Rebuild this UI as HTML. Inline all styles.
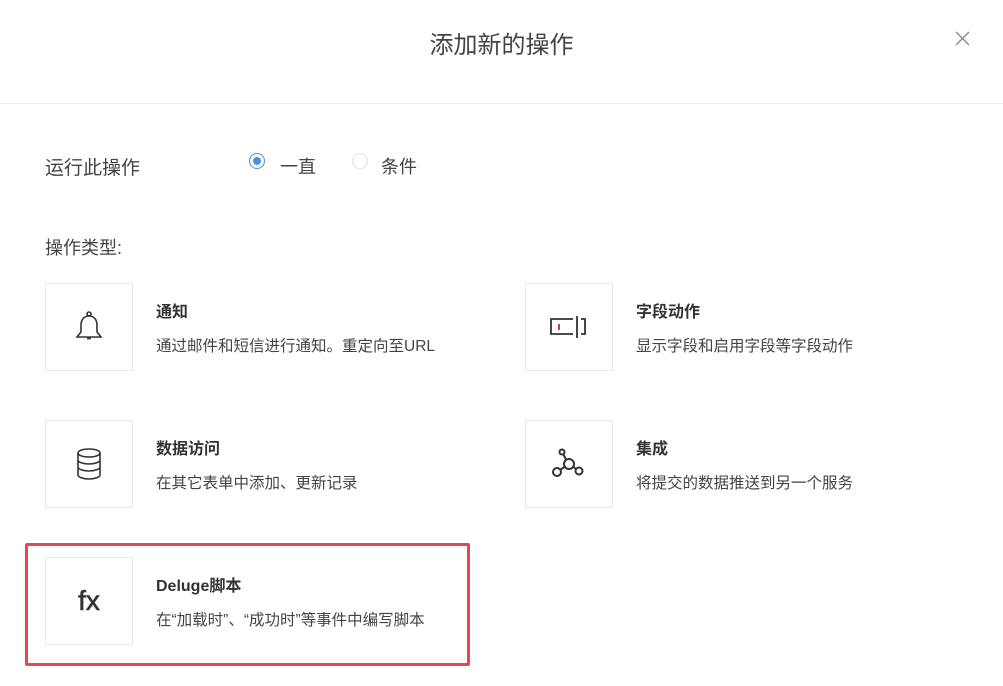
<!DOCTYPE html>
<html><head><meta charset="utf-8"><style>
body{margin:0;width:1003px;height:686px;background:#fff;font-family:"Liberation Sans","Noto Sans CJK SC",sans-serif;color:#333;position:relative;overflow:hidden}
.a{position:absolute;white-space:nowrap}
.box{position:absolute;width:86px;height:86px;border:1px solid #e8e8e8;display:flex;align-items:center;justify-content:center}
.t{position:absolute;font-size:16px;font-weight:bold;color:#333}
.d{position:absolute;font-size:15.5px;color:#444}
</style></head><body>
<div class="a" style="left:0;width:1003px;top:25px;text-align:center;font-size:24px;color:#444">添加新的操作</div>
<svg class="a" style="left:955px;top:31px" width="15" height="15"><path d="M1 1L14 14M14 1L1 14" stroke="#888" stroke-width="1.3"/></svg>
<div class="a" style="left:0;top:103px;width:1003px;height:1px;background:#ebebeb"></div>
<div class="a" style="left:45px;top:153px;font-size:19px;color:#444">运行此操作</div>
<div class="a" style="left:249px;top:153px;width:16px;height:16px;border:1px solid #4a90e2;border-radius:50%;box-sizing:border-box"></div>
<div class="a" style="left:253px;top:157px;width:8px;height:8px;background:#4a90e2;border-radius:50%"></div>
<div class="a" style="left:280px;top:153px;font-size:18px;color:#444">一直</div>
<div class="a" style="left:352px;top:153px;width:16px;height:16px;border:1px solid #dde;border-radius:50%;box-sizing:border-box"></div>
<div class="a" style="left:381px;top:153px;font-size:18px;color:#444">条件</div>
<div class="a" style="left:45px;top:234px;font-size:18px;color:#444">操作类型:</div>

<div class="box" style="left:45px;top:283px"><svg width="30" height="34" viewBox="0 0 30 34" fill="none" stroke="#333" stroke-width="1.6"><circle cx="15" cy="4" r="2"/><path d="M15 6C9 6 7 11 7 15V22L3 27H27L23 22V15C23 11 21 6 15 6Z"/><path d="M13 28.5h4"/></svg></div>
<div class="t" style="left:156px;top:298px">通知</div>
<div class="d" style="left:156px;top:334px">通过邮件和短信进行通知。重定向至URL</div>

<div class="box" style="left:525px;top:283px"><svg width="38" height="24" viewBox="0 0 38 24" fill="none" stroke="#333" stroke-width="1.8"><path d="M23 4H1V19H23"/><path d="M27 1V23"/><path d="M31 4H35V19H31"/><path d="M9 9V15" stroke="#a33"/></svg></div>
<div class="t" style="left:636px;top:298px">字段动作</div>
<div class="d" style="left:636px;top:334px">显示字段和启用字段等字段动作</div>

<div class="box" style="left:45px;top:420px"><svg width="28" height="34" viewBox="0 0 28 34" fill="none" stroke="#333" stroke-width="1.6"><ellipse cx="14" cy="6" rx="11" ry="4"/><path d="M3 6V28C3 30 8 32 14 32S25 30 25 28V6M3 13C3 15 8 17 14 17S25 15 25 13M3 20C3 22 8 24 14 24S25 22 25 20"/></svg></div>
<div class="t" style="left:156px;top:435px">数据访问</div>
<div class="d" style="left:156px;top:471px">在其它表单中添加、更新记录</div>

<div class="box" style="left:525px;top:420px"><svg width="36" height="34" viewBox="0 0 36 34" fill="none" stroke="#333" stroke-width="2"><circle cx="11" cy="5" r="2.5"/><circle cx="18" cy="17" r="5"/><circle cx="6" cy="25" r="4"/><circle cx="28" cy="24" r="3.5"/><path d="M12.5 7.5L15 12.5M13.5 20L9 23M22 19.5L25 22"/></svg></div>
<div class="t" style="left:636px;top:435px">集成</div>
<div class="d" style="left:636px;top:471px">将提交的数据推送到另一个服务</div>

<div class="box" style="left:45px;top:557px;font-size:28px;color:#333;font-family:'Liberation Sans',sans-serif;-webkit-text-stroke:0.6px #333">fx</div>
<div class="t" style="left:156px;top:572px">Deluge脚本</div>
<div class="d" style="left:156px;top:608px">在“加载时”、“成功时”等事件中编写脚本</div>
<div class="a" style="left:25px;top:543px;width:439px;height:117px;border:3px solid #e5484d;border-radius:2px"></div>
</body></html>
